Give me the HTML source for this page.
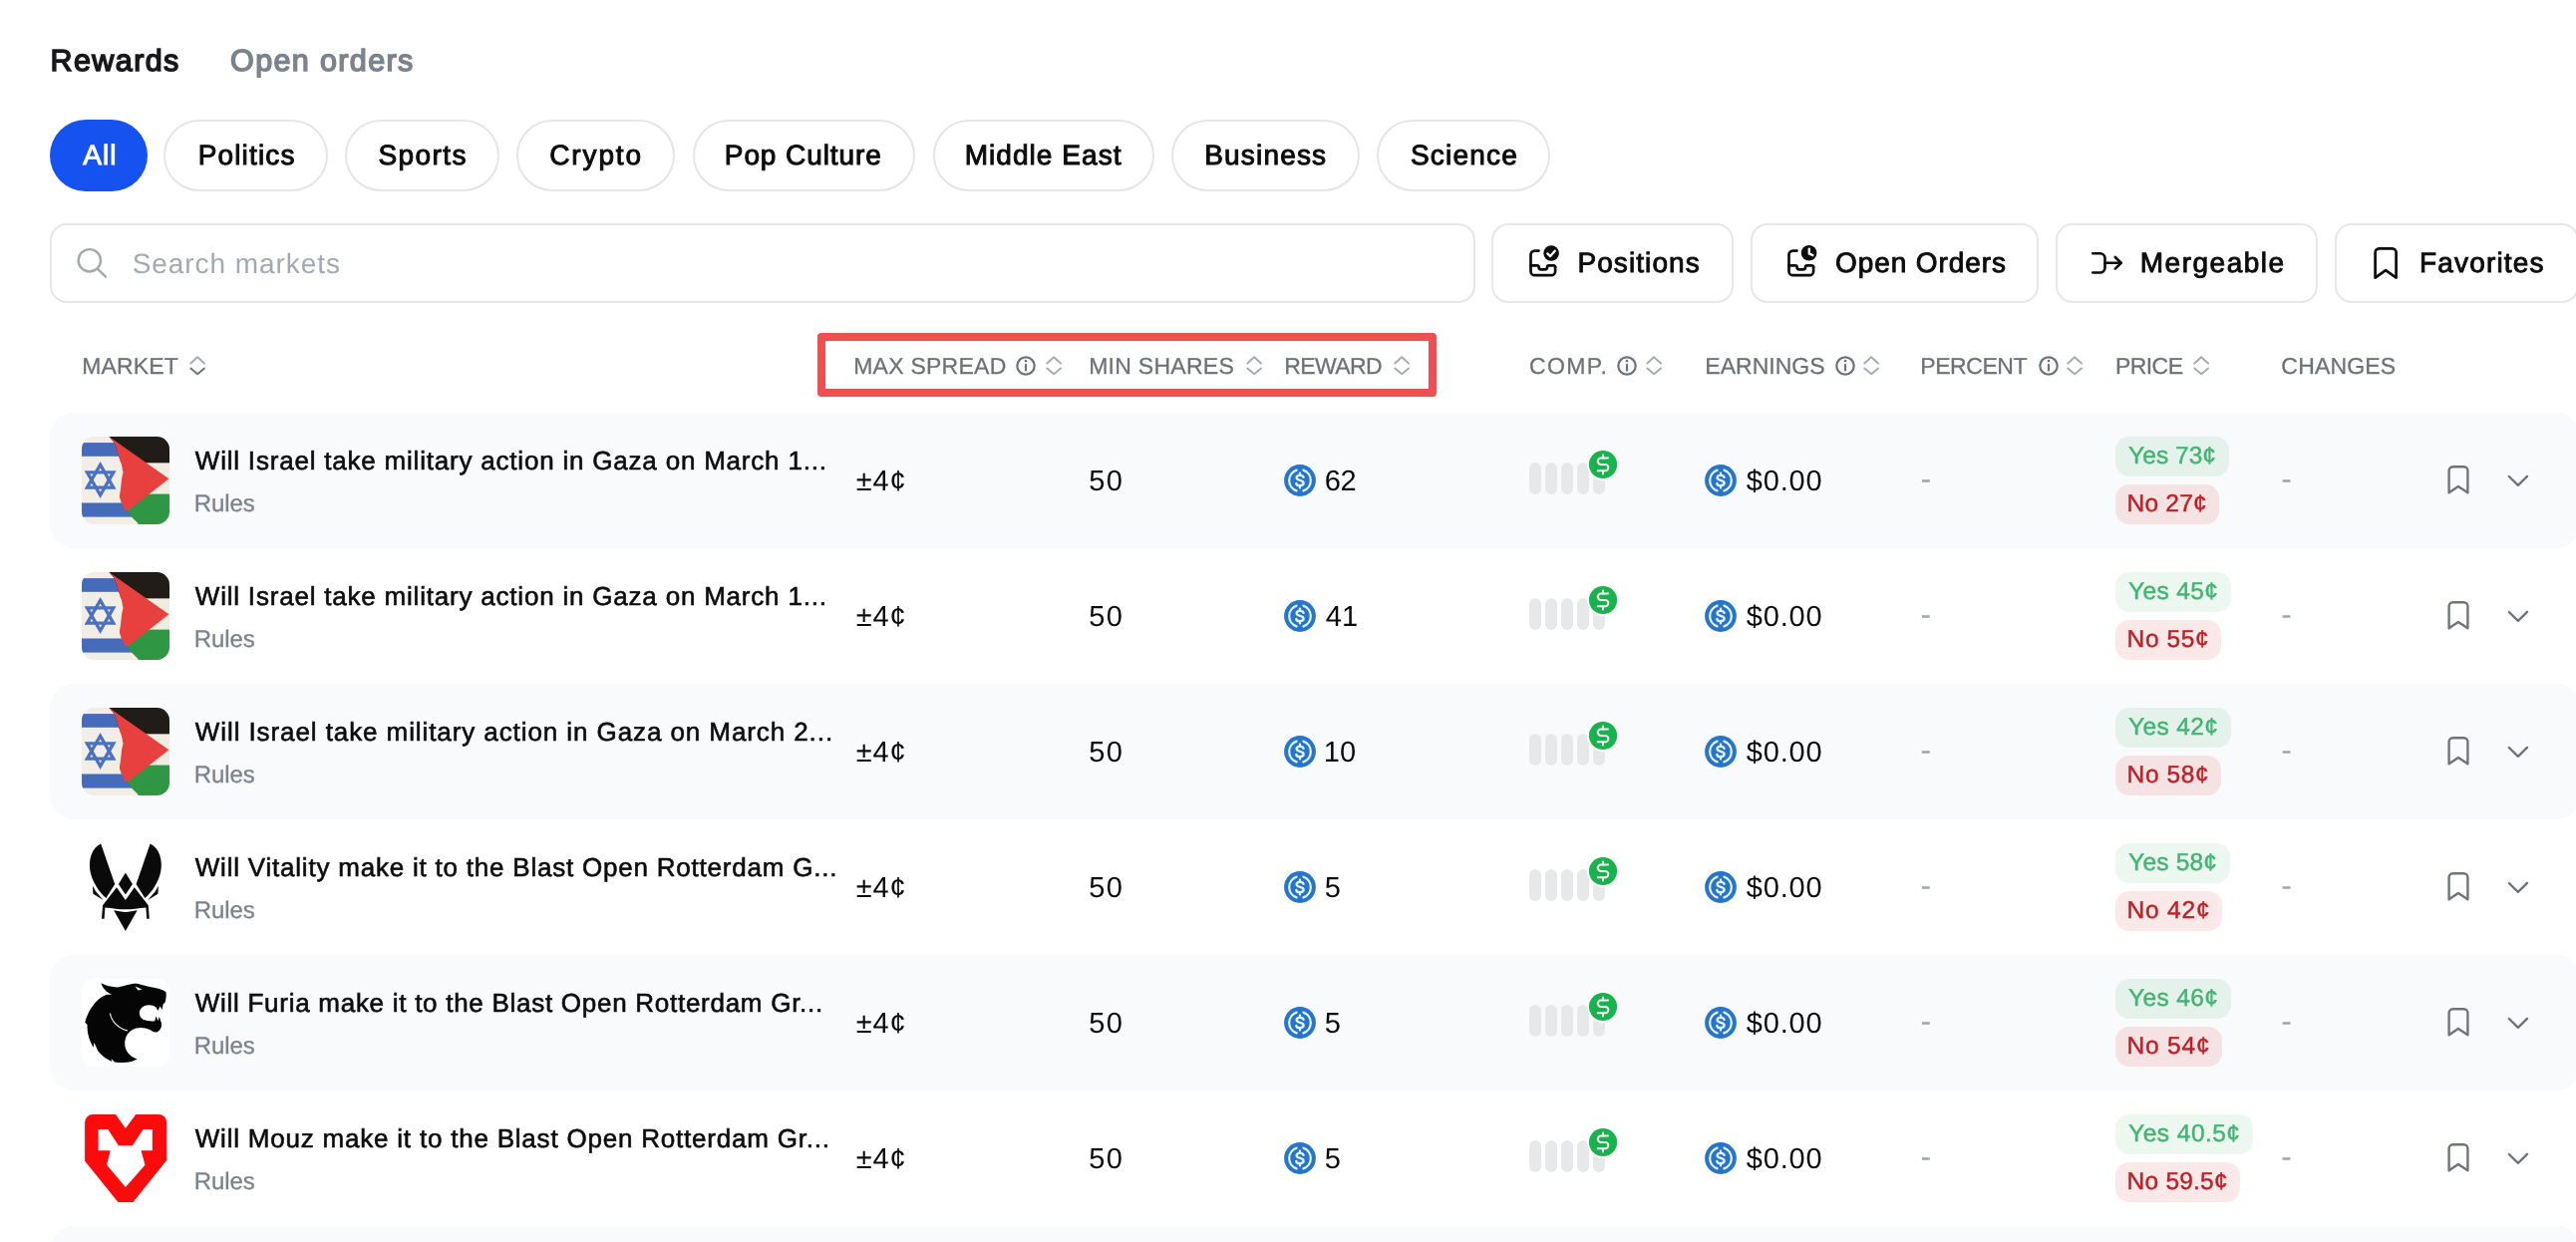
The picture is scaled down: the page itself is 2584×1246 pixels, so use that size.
<!DOCTYPE html>
<html lang="en"><head><meta charset="utf-8"><title>Rewards</title>
<style>
*{box-sizing:border-box;margin:0;padding:0;text-rendering:geometricPrecision}
html,body{width:2584px;height:1246px;overflow:hidden;background:#fff}
body{position:relative;font-family:"Liberation Sans", sans-serif}
#app{position:absolute;left:0;top:0;width:2584px;height:1246px;overflow:hidden;will-change:transform}
.t{position:absolute;white-space:nowrap;line-height:1;text-decoration:none;display:block}
.ic{position:absolute;display:block;overflow:visible}
.tabs,.pills,.thead,.tbody{position:absolute;left:0;top:0}
.pill{position:absolute;top:120px;height:72px;border-radius:36px;border:2px solid #e4e5e7;background:#fff}
.pill.on{background:#1652f0;border:0}
.search{position:absolute;left:50px;top:224px;width:1429.5px;height:80px;border:2px solid #e4e6e8;border-radius:17px;background:#fff}
.btn{position:absolute;top:224px;height:80px;border:2px solid #e6e7e9;border-radius:17px;background:#fff;font-family:inherit;display:block}
.hl{position:absolute;left:820px;top:334px;width:620.5px;height:64px;border:8px solid #f04f52;border-radius:4px}
.row{position:absolute;left:50px;width:2538px;height:136px;border-radius:24px}
.row.alt{background:#f9fafb}
.thumb{position:absolute;left:32px;top:24px;display:block}
.bars{position:absolute;left:1484px;top:50px;width:80px;height:32px}
.bars i{position:absolute;top:0;width:12px;height:32px;border-radius:6px;background:#e7e8ea}
.bars i:nth-child(1){left:0}.bars i:nth-child(2){left:16px}.bars i:nth-child(3){left:32px}.bars i:nth-child(4){left:48px}.bars i:nth-child(5){left:64px}
.tag{position:absolute;left:2072px;height:40px;border-radius:14px}
.tag.yes{top:24px;background:rgba(22,163,74,.085)}
.tag.no{top:72px;background:rgba(220,38,38,.105)}
</style></head>
<body>
<div id="app">
<nav class="tabs"><a class="t" style="left:50.55px;top:46px;font-size:30.5px;color:#18181b;letter-spacing:1.401px;-webkit-text-stroke:1.5px #18181b;">Rewards</a><a class="t" style="left:231.05px;top:46px;font-size:30.5px;color:#7b838f;letter-spacing:1.371px;-webkit-text-stroke:1.5px #7b838f;">Open orders</a></nav><div class="pills"><div class="pill on" style="left:50px;width:98px"><span class="t" style="left:33.20px;top:22px;font-size:28px;color:#fff;letter-spacing:1.102px;-webkit-text-stroke:1.0px #fff;">All</span></div>
<div class="pill" style="left:164px;width:165px"><span class="t" style="left:32.70px;top:20px;font-size:28px;color:#0c0c0d;letter-spacing:1.144px;-webkit-text-stroke:1.0px #0c0c0d;">Politics</span></div>
<div class="pill" style="left:346px;width:155px"><span class="t" style="left:31.40px;top:20px;font-size:28px;color:#0c0c0d;letter-spacing:1.415px;-webkit-text-stroke:1.0px #0c0c0d;">Sports</span></div>
<div class="pill" style="left:518px;width:159px"><span class="t" style="left:31.20px;top:20px;font-size:28px;color:#0c0c0d;letter-spacing:1.881px;-webkit-text-stroke:1.0px #0c0c0d;">Crypto</span></div>
<div class="pill" style="left:694.5px;width:223.5px"><span class="t" style="left:30.30px;top:20px;font-size:28px;color:#0c0c0d;letter-spacing:0.911px;-webkit-text-stroke:1.0px #0c0c0d;">Pop Culture</span></div>
<div class="pill" style="left:936px;width:222px"><span class="t" style="left:29.70px;top:20px;font-size:28px;color:#0c0c0d;letter-spacing:1.049px;-webkit-text-stroke:1.0px #0c0c0d;">Middle East</span></div>
<div class="pill" style="left:1175px;width:189px"><span class="t" style="left:31.20px;top:20px;font-size:28px;color:#0c0c0d;letter-spacing:1.184px;-webkit-text-stroke:1.0px #0c0c0d;">Business</span></div>
<div class="pill" style="left:1381px;width:174.29999999999995px"><span class="t" style="left:31.90px;top:20px;font-size:28px;color:#0c0c0d;letter-spacing:1.210px;-webkit-text-stroke:1.0px #0c0c0d;">Science</span></div></div>
<div class="search"><svg class="ic" style="left:20px;top:18.3px" width="40" height="40" viewBox="0 0 40 40" fill="none" stroke="#a3a8ad" stroke-width="2.4" stroke-linecap="round"><circle cx="17.8" cy="17.3" r="11.2"/><path d="M26 25.8 L34 33.6"/></svg><span class="t" style="left:80.70px;top:25px;font-size:28px;color:#a3a9b0;letter-spacing:0.941px;">Search markets</span></div><button class="btn" style="left:1496px;width:242.5px"><svg class="ic" style="left:32px;top:14px" width="40" height="44" viewBox="0 0 40 44" fill="none" stroke="#0c0c0d" stroke-width="2.7" stroke-linecap="round" stroke-linejoin="round"><path d="M13.5 11.6H9.5a4 4 0 0 0-4 4V32.2a4 4 0 0 0 4 4H26.1a4 4 0 0 0 4-4V27.9"/><path d="M5.5 26.4H12a1.6 1.6 0 0 1 1.6 1.6a2.4 2.4 0 0 0 2.4 2.4h3.6a2.4 2.4 0 0 0 2.4-2.4a1.6 1.6 0 0 1 1.6-1.6H28.6a1.5 1.5 0 0 1 1.5 1.5"/><circle cx="26.1" cy="14" r="7.8" fill="#0c0c0d" stroke="none"/><path d="M22.4 14.4l2.7 2.7l4.6-5.4" stroke="#fff" stroke-width="2.3"/></svg><span class="t" style="left:84.45px;top:24px;font-size:28px;color:#0c0c0d;letter-spacing:1.086px;-webkit-text-stroke:0.9px #0c0c0d;">Positions</span></button>
<button class="btn" style="left:1755.5px;width:289.5px"><svg class="ic" style="left:31.5px;top:14px" width="40" height="44" viewBox="0 0 40 44" fill="none" stroke="#0c0c0d" stroke-width="2.7" stroke-linecap="round" stroke-linejoin="round"><path d="M13.5 11.6H9.5a4 4 0 0 0-4 4V32.2a4 4 0 0 0 4 4H26.1a4 4 0 0 0 4-4V27.9"/><path d="M5.5 26.4H12a1.6 1.6 0 0 1 1.6 1.6a2.4 2.4 0 0 0 2.4 2.4h3.6a2.4 2.4 0 0 0 2.4-2.4a1.6 1.6 0 0 1 1.6-1.6H28.6a1.5 1.5 0 0 1 1.5 1.5"/><circle cx="25.6" cy="13.8" r="7.8" fill="#0c0c0d" stroke="none"/><path d="M25.8 9.6v4.8l3.6 1.7" stroke="#fff" stroke-width="2.4"/></svg><span class="t" style="left:83.45px;top:24px;font-size:28px;color:#0c0c0d;letter-spacing:0.925px;-webkit-text-stroke:0.9px #0c0c0d;">Open Orders</span></button>
<button class="btn" style="left:2061.5px;width:263.0px"><svg class="ic" style="left:34.5px;top:14px" width="40" height="44" viewBox="0 0 40 44" fill="none" stroke="#0c0c0d" stroke-width="2.6" stroke-linecap="round" stroke-linejoin="round"><path d="M1.3 14.3H8.5a5 5 0 0 1 5 5V28.5a5 5 0 0 1-5 5H1.3"/><path d="M13.6 23.8H29.4"/><path d="M23.8 18l5.9 5.8l-5.9 5.9"/></svg><span class="t" style="left:83.25px;top:24px;font-size:28px;color:#0c0c0d;letter-spacing:1.509px;-webkit-text-stroke:0.9px #0c0c0d;">Mergeable</span></button>
<button class="btn" style="left:2342px;width:245px"><svg class="ic" style="left:34px;top:14px" width="40" height="44" viewBox="0 0 40 44" fill="none" stroke="#0c0c0d" stroke-width="2.7" stroke-linecap="round" stroke-linejoin="round"><path d="M4.6 38.6V13.4a4 4 0 0 1 4-4H21.6a4 4 0 0 1 4 4V38.6L15.1 31.2Z"/></svg><span class="t" style="left:83.05px;top:24px;font-size:28px;color:#0c0c0d;letter-spacing:1.169px;-webkit-text-stroke:0.9px #0c0c0d;">Favorites</span></button><div class="thead"><span class="t th" style="left:82.15px;top:356px;font-size:23px;color:#6c717a;letter-spacing:0.142px;-webkit-text-stroke:0.3px #6c717a;">MARKET</span><svg class="ic" style="left:188.4px;top:354px" width="22" height="26" viewBox="0 0 22 26" fill="none" stroke-width="1.9" stroke-linecap="round" stroke-linejoin="round"><path d="M3.3 10.5L10.1 4.2L17 10.5" stroke="#a6aab1"/><path d="M3.3 15.5L10.2 21.3L17 15.5" stroke="#6b7280"/></svg><span class="t th" style="left:856.15px;top:356px;font-size:23px;color:#6c717a;letter-spacing:0.255px;-webkit-text-stroke:0.3px #6c717a;">MAX SPREAD</span><svg class="ic" style="left:1017.1px;top:355px" width="24" height="24" viewBox="0 0 24 24" fill="none" stroke="#6b7280" stroke-width="2.2" stroke-linecap="round"><circle cx="12" cy="12" r="8.7"/><path d="M12 10.9V16.6"/><circle cx="12" cy="7.1" r="1.35" fill="#6b7280" stroke="none"/></svg><svg class="ic" style="left:1046.6px;top:354px" width="22" height="26" viewBox="0 0 22 26" fill="none" stroke-width="1.9" stroke-linecap="round" stroke-linejoin="round"><path d="M3.3 10.5L10.1 4.2L17 10.5" stroke="#a6aab1"/><path d="M3.3 15.5L10.2 21.3L17 15.5" stroke="#a6aab1"/></svg><span class="t th" style="left:1092.15px;top:356px;font-size:23px;color:#6c717a;letter-spacing:0.279px;-webkit-text-stroke:0.3px #6c717a;">MIN SHARES</span><svg class="ic" style="left:1247.6px;top:354px" width="22" height="26" viewBox="0 0 22 26" fill="none" stroke-width="1.9" stroke-linecap="round" stroke-linejoin="round"><path d="M3.3 10.5L10.1 4.2L17 10.5" stroke="#a6aab1"/><path d="M3.3 15.5L10.2 21.3L17 15.5" stroke="#a6aab1"/></svg><span class="t th" style="left:1288.15px;top:356px;font-size:23px;color:#6c717a;letter-spacing:-0.571px;-webkit-text-stroke:0.3px #6c717a;">REWARD</span><svg class="ic" style="left:1396.0px;top:354px" width="22" height="26" viewBox="0 0 22 26" fill="none" stroke-width="1.9" stroke-linecap="round" stroke-linejoin="round"><path d="M3.3 10.5L10.1 4.2L17 10.5" stroke="#a6aab1"/><path d="M3.3 15.5L10.2 21.3L17 15.5" stroke="#a6aab1"/></svg><span class="t th" style="left:1533.95px;top:356px;font-size:23px;color:#6c717a;letter-spacing:1.366px;-webkit-text-stroke:0.3px #6c717a;">COMP.</span><svg class="ic" style="left:1619.5px;top:355px" width="24" height="24" viewBox="0 0 24 24" fill="none" stroke="#6b7280" stroke-width="2.2" stroke-linecap="round"><circle cx="12" cy="12" r="8.7"/><path d="M12 10.9V16.6"/><circle cx="12" cy="7.1" r="1.35" fill="#6b7280" stroke="none"/></svg><svg class="ic" style="left:1648.7px;top:354px" width="22" height="26" viewBox="0 0 22 26" fill="none" stroke-width="1.9" stroke-linecap="round" stroke-linejoin="round"><path d="M3.3 10.5L10.1 4.2L17 10.5" stroke="#a6aab1"/><path d="M3.3 15.5L10.2 21.3L17 15.5" stroke="#a6aab1"/></svg><span class="t th" style="left:1710.35px;top:356px;font-size:23px;color:#6c717a;-webkit-text-stroke:0.3px #6c717a;">EARNINGS</span><svg class="ic" style="left:1838.5px;top:355px" width="24" height="24" viewBox="0 0 24 24" fill="none" stroke="#6b7280" stroke-width="2.2" stroke-linecap="round"><circle cx="12" cy="12" r="8.7"/><path d="M12 10.9V16.6"/><circle cx="12" cy="7.1" r="1.35" fill="#6b7280" stroke="none"/></svg><svg class="ic" style="left:1867.3px;top:354px" width="22" height="26" viewBox="0 0 22 26" fill="none" stroke-width="1.9" stroke-linecap="round" stroke-linejoin="round"><path d="M3.3 10.5L10.1 4.2L17 10.5" stroke="#a6aab1"/><path d="M3.3 15.5L10.2 21.3L17 15.5" stroke="#a6aab1"/></svg><span class="t th" style="left:1926.35px;top:356px;font-size:23px;color:#6c717a;letter-spacing:-0.459px;-webkit-text-stroke:0.3px #6c717a;">PERCENT</span><svg class="ic" style="left:2042.5px;top:355px" width="24" height="24" viewBox="0 0 24 24" fill="none" stroke="#6b7280" stroke-width="2.2" stroke-linecap="round"><circle cx="12" cy="12" r="8.7"/><path d="M12 10.9V16.6"/><circle cx="12" cy="7.1" r="1.35" fill="#6b7280" stroke="none"/></svg><svg class="ic" style="left:2071.0px;top:354px" width="22" height="26" viewBox="0 0 22 26" fill="none" stroke-width="1.9" stroke-linecap="round" stroke-linejoin="round"><path d="M3.3 10.5L10.1 4.2L17 10.5" stroke="#a6aab1"/><path d="M3.3 15.5L10.2 21.3L17 15.5" stroke="#a6aab1"/></svg><span class="t th" style="left:2121.95px;top:356px;font-size:23px;color:#6c717a;letter-spacing:-0.563px;-webkit-text-stroke:0.3px #6c717a;">PRICE</span><svg class="ic" style="left:2198.3px;top:354px" width="22" height="26" viewBox="0 0 22 26" fill="none" stroke-width="1.9" stroke-linecap="round" stroke-linejoin="round"><path d="M3.3 10.5L10.1 4.2L17 10.5" stroke="#a6aab1"/><path d="M3.3 15.5L10.2 21.3L17 15.5" stroke="#a6aab1"/></svg><span class="t th" style="left:2288.35px;top:356px;font-size:23px;color:#6c717a;letter-spacing:0.183px;-webkit-text-stroke:0.3px #6c717a;">CHANGES</span><div class="hl"></div></div>
<div class="tbody"><div class="row alt" style="top:414px"><svg class="thumb" width="88" height="88" viewBox="0 0 88 88"><defs><clipPath id="cpF0"><rect width="88" height="88" rx="12.5"/></clipPath><clipPath id="cpT0"><path d="M27.4 0L32.6 6L35 12L36.7 18.2L39.9 27.8L41.5 35.9L40.3 41L39.9 43.9L39.1 52L37.9 60L39.9 66.5L43.1 72.9L46.3 75.3L50.4 81L56 86.6L56.8 88H88V0Z"/></clipPath></defs><g clip-path="url(#cpF0)"><rect width="88" height="88" fill="#f3eee5"/><rect x="0" y="6.1" width="42" height="13.7" fill="#446cba"/><rect x="0" y="66.5" width="52" height="14.1" fill="#446cba"/><g fill="none" stroke="#4b71c0" stroke-width="3.3" stroke-linejoin="miter"><path d="M18.6 28.3L31.76 51.1H5.44Z"/><path d="M18.6 58.7L5.44 35.9H31.76Z"/></g><g clip-path="url(#cpT0)"><rect x="20" y="0" width="68" height="26.6" fill="#221c19"/><rect x="20" y="26.6" width="68" height="31" fill="#f1ece2"/><rect x="20" y="57.6" width="68" height="31" fill="#2f9644"/><path d="M20 -5.2L87.4 42.3L20 95Z" fill="#e8403f"/></g></g></svg><span class="t title" style="left:145.80px;top:35px;font-size:26px;color:#0c0c0d;letter-spacing:0.795px;-webkit-text-stroke:0.6px #0c0c0d;">Will Israel take military action in Gaza on March 1...</span><span class="t" style="left:144.85px;top:80px;font-size:24px;color:#7b8391;letter-spacing:-0.090px;-webkit-text-stroke:0.3px #7b8391;">Rules</span><span class="t" style="left:808.70px;top:55px;font-size:29px;color:#0a0a0a;letter-spacing:0.828px;">±4¢</span><span class="t" style="left:1042.30px;top:55px;font-size:29px;color:#0a0a0a;letter-spacing:1.372px;">50</span><svg class="ic" style="left:1238px;top:52px" width="32" height="32" viewBox="0 0 32 32"><circle cx="16" cy="16" r="15.9" fill="#2775ca"/><g fill="none" stroke="#e6f5ff" stroke-width="2.2" stroke-linecap="round"><path d="M12.6 5.6A11 11 0 0 0 12.6 26.4"/><path d="M19.4 5.6A11 11 0 0 1 19.4 26.4"/><path d="M19.6 12.9C19.2 11.4 17.8 10.8 16 10.8C14 10.8 12.6 11.8 12.6 13.3C12.6 16.8 19.6 15 19.6 18.6C19.6 20.2 18.1 21.2 16 21.2C14 21.2 12.6 20.4 12.3 18.9" stroke-width="2.3"/><path d="M16 8.6V10.6M16 21.4V23.4" stroke-width="2.3"/></g></svg><span class="t" style="left:1278.80px;top:55px;font-size:29px;color:#0a0a0a;letter-spacing:-0.428px;">62</span><div class="bars"><i></i><i></i><i></i><i></i><i></i></div><svg class="ic" style="left:1542px;top:36px" width="32" height="32" viewBox="0 0 32 32"><circle cx="16" cy="16" r="16" fill="#fff"/><circle cx="16" cy="16" r="14.1" fill="#17b34c"/><g fill="none" stroke="#fff" stroke-width="2" stroke-linecap="round" stroke-linejoin="round"><path d="M16 6.4V9.4M16 22.6V25.6"/><path d="M21 9.5H14a3.2 3.2 0 0 0 0 6.4h4.2a3.2 3.2 0 0 1 0 6.4H10.8"/></g></svg><svg class="ic" style="left:1660px;top:52px" width="32" height="32" viewBox="0 0 32 32"><circle cx="16" cy="16" r="15.9" fill="#2775ca"/><g fill="none" stroke="#e6f5ff" stroke-width="2.2" stroke-linecap="round"><path d="M12.6 5.6A11 11 0 0 0 12.6 26.4"/><path d="M19.4 5.6A11 11 0 0 1 19.4 26.4"/><path d="M19.6 12.9C19.2 11.4 17.8 10.8 16 10.8C14 10.8 12.6 11.8 12.6 13.3C12.6 16.8 19.6 15 19.6 18.6C19.6 20.2 18.1 21.2 16 21.2C14 21.2 12.6 20.4 12.3 18.9" stroke-width="2.3"/><path d="M16 8.6V10.6M16 21.4V23.4" stroke-width="2.3"/></g></svg><span class="t" style="left:1701.80px;top:55px;font-size:29px;color:#0a0a0a;letter-spacing:0.789px;">$0.00</span><span class="t muted" style="left:1876.40px;top:50px;font-size:32px;color:#a0a5ad;">-</span><div class="tag yes" style="width:114px"><span class="t" style="left:13.12px;top:8px;font-size:24.5px;color:#44b473;letter-spacing:0.037px;-webkit-text-stroke:0.45px #44b473;">Yes 73¢</span></div>
<div class="tag no" style="width:104px"><span class="t" style="left:11.62px;top:8px;font-size:24.5px;color:#bf1f25;letter-spacing:0.195px;-webkit-text-stroke:0.45px #bf1f25;">No 27¢</span></div><span class="t muted" style="left:2238.20px;top:50px;font-size:32px;color:#a0a5ad;">-</span><svg class="ic" style="left:2400px;top:48px" width="32" height="40" viewBox="0 0 32 40" fill="none" stroke="#6e737c" stroke-width="2.4" stroke-linecap="round" stroke-linejoin="round"><path d="M6.6 32.3V10.3a4 4 0 0 1 4-4H21.4a4 4 0 0 1 4 4V32.3L15.9 26Z"/></svg><svg class="ic" style="left:2460px;top:56px" width="32" height="24" viewBox="0 0 32 24" fill="none" stroke="#6e737c" stroke-width="2.4" stroke-linecap="round" stroke-linejoin="round"><path d="M6.8 8L15.9 16.8L25 7.9"/></svg></div>
<div class="row" style="top:550px"><svg class="thumb" width="88" height="88" viewBox="0 0 88 88"><defs><clipPath id="cpF1"><rect width="88" height="88" rx="12.5"/></clipPath><clipPath id="cpT1"><path d="M27.4 0L32.6 6L35 12L36.7 18.2L39.9 27.8L41.5 35.9L40.3 41L39.9 43.9L39.1 52L37.9 60L39.9 66.5L43.1 72.9L46.3 75.3L50.4 81L56 86.6L56.8 88H88V0Z"/></clipPath></defs><g clip-path="url(#cpF1)"><rect width="88" height="88" fill="#f3eee5"/><rect x="0" y="6.1" width="42" height="13.7" fill="#446cba"/><rect x="0" y="66.5" width="52" height="14.1" fill="#446cba"/><g fill="none" stroke="#4b71c0" stroke-width="3.3" stroke-linejoin="miter"><path d="M18.6 28.3L31.76 51.1H5.44Z"/><path d="M18.6 58.7L5.44 35.9H31.76Z"/></g><g clip-path="url(#cpT1)"><rect x="20" y="0" width="68" height="26.6" fill="#221c19"/><rect x="20" y="26.6" width="68" height="31" fill="#f1ece2"/><rect x="20" y="57.6" width="68" height="31" fill="#2f9644"/><path d="M20 -5.2L87.4 42.3L20 95Z" fill="#e8403f"/></g></g></svg><span class="t title" style="left:145.80px;top:35px;font-size:26px;color:#0c0c0d;letter-spacing:0.795px;-webkit-text-stroke:0.6px #0c0c0d;">Will Israel take military action in Gaza on March 1...</span><span class="t" style="left:144.85px;top:80px;font-size:24px;color:#7b8391;letter-spacing:-0.090px;-webkit-text-stroke:0.3px #7b8391;">Rules</span><span class="t" style="left:808.70px;top:55px;font-size:29px;color:#0a0a0a;letter-spacing:0.828px;">±4¢</span><span class="t" style="left:1042.30px;top:55px;font-size:29px;color:#0a0a0a;letter-spacing:1.372px;">50</span><svg class="ic" style="left:1238px;top:52px" width="32" height="32" viewBox="0 0 32 32"><circle cx="16" cy="16" r="15.9" fill="#2775ca"/><g fill="none" stroke="#e6f5ff" stroke-width="2.2" stroke-linecap="round"><path d="M12.6 5.6A11 11 0 0 0 12.6 26.4"/><path d="M19.4 5.6A11 11 0 0 1 19.4 26.4"/><path d="M19.6 12.9C19.2 11.4 17.8 10.8 16 10.8C14 10.8 12.6 11.8 12.6 13.3C12.6 16.8 19.6 15 19.6 18.6C19.6 20.2 18.1 21.2 16 21.2C14 21.2 12.6 20.4 12.3 18.9" stroke-width="2.3"/><path d="M16 8.6V10.6M16 21.4V23.4" stroke-width="2.3"/></g></svg><span class="t" style="left:1279.80px;top:55px;font-size:29px;color:#0a0a0a;">41</span><div class="bars"><i></i><i></i><i></i><i></i><i></i></div><svg class="ic" style="left:1542px;top:36px" width="32" height="32" viewBox="0 0 32 32"><circle cx="16" cy="16" r="16" fill="#fff"/><circle cx="16" cy="16" r="14.1" fill="#17b34c"/><g fill="none" stroke="#fff" stroke-width="2" stroke-linecap="round" stroke-linejoin="round"><path d="M16 6.4V9.4M16 22.6V25.6"/><path d="M21 9.5H14a3.2 3.2 0 0 0 0 6.4h4.2a3.2 3.2 0 0 1 0 6.4H10.8"/></g></svg><svg class="ic" style="left:1660px;top:52px" width="32" height="32" viewBox="0 0 32 32"><circle cx="16" cy="16" r="15.9" fill="#2775ca"/><g fill="none" stroke="#e6f5ff" stroke-width="2.2" stroke-linecap="round"><path d="M12.6 5.6A11 11 0 0 0 12.6 26.4"/><path d="M19.4 5.6A11 11 0 0 1 19.4 26.4"/><path d="M19.6 12.9C19.2 11.4 17.8 10.8 16 10.8C14 10.8 12.6 11.8 12.6 13.3C12.6 16.8 19.6 15 19.6 18.6C19.6 20.2 18.1 21.2 16 21.2C14 21.2 12.6 20.4 12.3 18.9" stroke-width="2.3"/><path d="M16 8.6V10.6M16 21.4V23.4" stroke-width="2.3"/></g></svg><span class="t" style="left:1701.80px;top:55px;font-size:29px;color:#0a0a0a;letter-spacing:0.789px;">$0.00</span><span class="t muted" style="left:1876.40px;top:50px;font-size:32px;color:#a0a5ad;">-</span><div class="tag yes" style="width:116px"><span class="t" style="left:13.12px;top:8px;font-size:24.5px;color:#44b473;letter-spacing:0.371px;-webkit-text-stroke:0.45px #44b473;">Yes 45¢</span></div>
<div class="tag no" style="width:106px"><span class="t" style="left:11.62px;top:8px;font-size:24.5px;color:#bf1f25;letter-spacing:0.595px;-webkit-text-stroke:0.45px #bf1f25;">No 55¢</span></div><span class="t muted" style="left:2238.20px;top:50px;font-size:32px;color:#a0a5ad;">-</span><svg class="ic" style="left:2400px;top:48px" width="32" height="40" viewBox="0 0 32 40" fill="none" stroke="#6e737c" stroke-width="2.4" stroke-linecap="round" stroke-linejoin="round"><path d="M6.6 32.3V10.3a4 4 0 0 1 4-4H21.4a4 4 0 0 1 4 4V32.3L15.9 26Z"/></svg><svg class="ic" style="left:2460px;top:56px" width="32" height="24" viewBox="0 0 32 24" fill="none" stroke="#6e737c" stroke-width="2.4" stroke-linecap="round" stroke-linejoin="round"><path d="M6.8 8L15.9 16.8L25 7.9"/></svg></div>
<div class="row alt" style="top:686px"><svg class="thumb" width="88" height="88" viewBox="0 0 88 88"><defs><clipPath id="cpF2"><rect width="88" height="88" rx="12.5"/></clipPath><clipPath id="cpT2"><path d="M27.4 0L32.6 6L35 12L36.7 18.2L39.9 27.8L41.5 35.9L40.3 41L39.9 43.9L39.1 52L37.9 60L39.9 66.5L43.1 72.9L46.3 75.3L50.4 81L56 86.6L56.8 88H88V0Z"/></clipPath></defs><g clip-path="url(#cpF2)"><rect width="88" height="88" fill="#f3eee5"/><rect x="0" y="6.1" width="42" height="13.7" fill="#446cba"/><rect x="0" y="66.5" width="52" height="14.1" fill="#446cba"/><g fill="none" stroke="#4b71c0" stroke-width="3.3" stroke-linejoin="miter"><path d="M18.6 28.3L31.76 51.1H5.44Z"/><path d="M18.6 58.7L5.44 35.9H31.76Z"/></g><g clip-path="url(#cpT2)"><rect x="20" y="0" width="68" height="26.6" fill="#221c19"/><rect x="20" y="26.6" width="68" height="31" fill="#f1ece2"/><rect x="20" y="57.6" width="68" height="31" fill="#2f9644"/><path d="M20 -5.2L87.4 42.3L20 95Z" fill="#e8403f"/></g></g></svg><span class="t title" style="left:145.80px;top:35px;font-size:26px;color:#0c0c0d;letter-spacing:0.912px;-webkit-text-stroke:0.6px #0c0c0d;">Will Israel take military action in Gaza on March 2...</span><span class="t" style="left:144.85px;top:80px;font-size:24px;color:#7b8391;letter-spacing:-0.090px;-webkit-text-stroke:0.3px #7b8391;">Rules</span><span class="t" style="left:808.70px;top:55px;font-size:29px;color:#0a0a0a;letter-spacing:0.828px;">±4¢</span><span class="t" style="left:1042.30px;top:55px;font-size:29px;color:#0a0a0a;letter-spacing:1.372px;">50</span><svg class="ic" style="left:1238px;top:52px" width="32" height="32" viewBox="0 0 32 32"><circle cx="16" cy="16" r="15.9" fill="#2775ca"/><g fill="none" stroke="#e6f5ff" stroke-width="2.2" stroke-linecap="round"><path d="M12.6 5.6A11 11 0 0 0 12.6 26.4"/><path d="M19.4 5.6A11 11 0 0 1 19.4 26.4"/><path d="M19.6 12.9C19.2 11.4 17.8 10.8 16 10.8C14 10.8 12.6 11.8 12.6 13.3C12.6 16.8 19.6 15 19.6 18.6C19.6 20.2 18.1 21.2 16 21.2C14 21.2 12.6 20.4 12.3 18.9" stroke-width="2.3"/><path d="M16 8.6V10.6M16 21.4V23.4" stroke-width="2.3"/></g></svg><span class="t" style="left:1277.80px;top:55px;font-size:29px;color:#0a0a0a;">10</span><div class="bars"><i></i><i></i><i></i><i></i><i></i></div><svg class="ic" style="left:1542px;top:36px" width="32" height="32" viewBox="0 0 32 32"><circle cx="16" cy="16" r="16" fill="#fff"/><circle cx="16" cy="16" r="14.1" fill="#17b34c"/><g fill="none" stroke="#fff" stroke-width="2" stroke-linecap="round" stroke-linejoin="round"><path d="M16 6.4V9.4M16 22.6V25.6"/><path d="M21 9.5H14a3.2 3.2 0 0 0 0 6.4h4.2a3.2 3.2 0 0 1 0 6.4H10.8"/></g></svg><svg class="ic" style="left:1660px;top:52px" width="32" height="32" viewBox="0 0 32 32"><circle cx="16" cy="16" r="15.9" fill="#2775ca"/><g fill="none" stroke="#e6f5ff" stroke-width="2.2" stroke-linecap="round"><path d="M12.6 5.6A11 11 0 0 0 12.6 26.4"/><path d="M19.4 5.6A11 11 0 0 1 19.4 26.4"/><path d="M19.6 12.9C19.2 11.4 17.8 10.8 16 10.8C14 10.8 12.6 11.8 12.6 13.3C12.6 16.8 19.6 15 19.6 18.6C19.6 20.2 18.1 21.2 16 21.2C14 21.2 12.6 20.4 12.3 18.9" stroke-width="2.3"/><path d="M16 8.6V10.6M16 21.4V23.4" stroke-width="2.3"/></g></svg><span class="t" style="left:1701.80px;top:55px;font-size:29px;color:#0a0a0a;letter-spacing:0.789px;">$0.00</span><span class="t muted" style="left:1876.40px;top:50px;font-size:32px;color:#a0a5ad;">-</span><div class="tag yes" style="width:116px"><span class="t" style="left:13.12px;top:8px;font-size:24.5px;color:#44b473;letter-spacing:0.371px;-webkit-text-stroke:0.45px #44b473;">Yes 42¢</span></div>
<div class="tag no" style="width:106px"><span class="t" style="left:11.62px;top:8px;font-size:24.5px;color:#bf1f25;letter-spacing:0.595px;-webkit-text-stroke:0.45px #bf1f25;">No 58¢</span></div><span class="t muted" style="left:2238.20px;top:50px;font-size:32px;color:#a0a5ad;">-</span><svg class="ic" style="left:2400px;top:48px" width="32" height="40" viewBox="0 0 32 40" fill="none" stroke="#6e737c" stroke-width="2.4" stroke-linecap="round" stroke-linejoin="round"><path d="M6.6 32.3V10.3a4 4 0 0 1 4-4H21.4a4 4 0 0 1 4 4V32.3L15.9 26Z"/></svg><svg class="ic" style="left:2460px;top:56px" width="32" height="24" viewBox="0 0 32 24" fill="none" stroke="#6e737c" stroke-width="2.4" stroke-linecap="round" stroke-linejoin="round"><path d="M6.8 8L15.9 16.8L25 7.9"/></svg></div>
<div class="row" style="top:822px"><svg class="thumb" width="88" height="88" viewBox="0 0 88 88" fill="#0a0a0a"><path d="M19.2 0.6C10.5 4.2 6.2 16.5 8.6 28.5C10.6 38.5 17 48.5 24.4 55L33.2 41Z"/><path d="M68.6 0.6C77.3 4.2 81.6 16.5 79.2 28.5C77.2 38.5 70.8 48.5 63.4 55L54.6 41Z"/><path d="M43.9 29.4L50.9 41L43.9 51.6L36.9 41Z"/><path d="M35 44.2L43.9 57L52.8 44.2L66.8 62.3L67.8 75.8L65.2 75.8L64.4 64.4C57 65.2 50 66.2 43.9 66.2C37.8 66.2 30.8 65.2 23.4 64.4L22.6 75.8L20 75.8L21 62.3Z"/><path d="M32.1 67.2C36 67.8 40 68.8 43.9 69C47.8 68.8 51.8 67.8 55.7 67.2L43.9 88Z"/><path d="M10.9 42.8L14.2 48.6L21.6 57L11.4 50.8Z"/><path d="M76.9 42.8L73.6 48.6L66.2 57L76.4 50.8Z"/></svg><span class="t title" style="left:145.80px;top:35px;font-size:26px;color:#0c0c0d;letter-spacing:0.784px;-webkit-text-stroke:0.6px #0c0c0d;">Will Vitality make it to the Blast Open Rotterdam G...</span><span class="t" style="left:144.85px;top:80px;font-size:24px;color:#7b8391;letter-spacing:-0.090px;-webkit-text-stroke:0.3px #7b8391;">Rules</span><span class="t" style="left:808.70px;top:55px;font-size:29px;color:#0a0a0a;letter-spacing:0.828px;">±4¢</span><span class="t" style="left:1042.30px;top:55px;font-size:29px;color:#0a0a0a;letter-spacing:1.372px;">50</span><svg class="ic" style="left:1238px;top:52px" width="32" height="32" viewBox="0 0 32 32"><circle cx="16" cy="16" r="15.9" fill="#2775ca"/><g fill="none" stroke="#e6f5ff" stroke-width="2.2" stroke-linecap="round"><path d="M12.6 5.6A11 11 0 0 0 12.6 26.4"/><path d="M19.4 5.6A11 11 0 0 1 19.4 26.4"/><path d="M19.6 12.9C19.2 11.4 17.8 10.8 16 10.8C14 10.8 12.6 11.8 12.6 13.3C12.6 16.8 19.6 15 19.6 18.6C19.6 20.2 18.1 21.2 16 21.2C14 21.2 12.6 20.4 12.3 18.9" stroke-width="2.3"/><path d="M16 8.6V10.6M16 21.4V23.4" stroke-width="2.3"/></g></svg><span class="t" style="left:1278.80px;top:55px;font-size:29px;color:#0a0a0a;">5</span><div class="bars"><i></i><i></i><i></i><i></i><i></i></div><svg class="ic" style="left:1542px;top:36px" width="32" height="32" viewBox="0 0 32 32"><circle cx="16" cy="16" r="16" fill="#fff"/><circle cx="16" cy="16" r="14.1" fill="#17b34c"/><g fill="none" stroke="#fff" stroke-width="2" stroke-linecap="round" stroke-linejoin="round"><path d="M16 6.4V9.4M16 22.6V25.6"/><path d="M21 9.5H14a3.2 3.2 0 0 0 0 6.4h4.2a3.2 3.2 0 0 1 0 6.4H10.8"/></g></svg><svg class="ic" style="left:1660px;top:52px" width="32" height="32" viewBox="0 0 32 32"><circle cx="16" cy="16" r="15.9" fill="#2775ca"/><g fill="none" stroke="#e6f5ff" stroke-width="2.2" stroke-linecap="round"><path d="M12.6 5.6A11 11 0 0 0 12.6 26.4"/><path d="M19.4 5.6A11 11 0 0 1 19.4 26.4"/><path d="M19.6 12.9C19.2 11.4 17.8 10.8 16 10.8C14 10.8 12.6 11.8 12.6 13.3C12.6 16.8 19.6 15 19.6 18.6C19.6 20.2 18.1 21.2 16 21.2C14 21.2 12.6 20.4 12.3 18.9" stroke-width="2.3"/><path d="M16 8.6V10.6M16 21.4V23.4" stroke-width="2.3"/></g></svg><span class="t" style="left:1701.80px;top:55px;font-size:29px;color:#0a0a0a;letter-spacing:0.789px;">$0.00</span><span class="t muted" style="left:1876.40px;top:50px;font-size:32px;color:#a0a5ad;">-</span><div class="tag yes" style="width:115px"><span class="t" style="left:13.12px;top:8px;font-size:24.5px;color:#44b473;letter-spacing:0.204px;-webkit-text-stroke:0.45px #44b473;">Yes 58¢</span></div>
<div class="tag no" style="width:107px"><span class="t" style="left:11.62px;top:8px;font-size:24.5px;color:#bf1f25;letter-spacing:0.795px;-webkit-text-stroke:0.45px #bf1f25;">No 42¢</span></div><span class="t muted" style="left:2238.20px;top:50px;font-size:32px;color:#a0a5ad;">-</span><svg class="ic" style="left:2400px;top:48px" width="32" height="40" viewBox="0 0 32 40" fill="none" stroke="#6e737c" stroke-width="2.4" stroke-linecap="round" stroke-linejoin="round"><path d="M6.6 32.3V10.3a4 4 0 0 1 4-4H21.4a4 4 0 0 1 4 4V32.3L15.9 26Z"/></svg><svg class="ic" style="left:2460px;top:56px" width="32" height="24" viewBox="0 0 32 24" fill="none" stroke="#6e737c" stroke-width="2.4" stroke-linecap="round" stroke-linejoin="round"><path d="M6.8 8L15.9 16.8L25 7.9"/></svg></div>
<div class="row alt" style="top:958px"><svg class="thumb" width="88" height="88" viewBox="0 0 88 88"><rect width="88" height="88" rx="12" fill="#fff"/><path fill="#050505" d="M19.5 4.2C24 7 30 8.2 36 8.4C42 7.6 48 4.6 55.5 4.8C62 6.5 68 8 74.5 9.2C79 10 82.5 11.5 84.6 13.4C84.8 17 84.6 20.5 83.6 23.6L81.6 25.6L80.6 31L78.6 27.5L76.4 32L74.6 28.4C70 25.6 63.5 25.4 59.6 29.6C56.6 33.4 57.6 38.4 61.6 40.8C65.6 42.4 70 42.6 73.4 42.2L74.4 37.6L76.6 42L77.8 38L79.6 43.6C80.8 47 79.6 51 76 53.2C73 54 70.6 52.6 68.6 51C64 48.8 58.6 48.4 54.6 49.4C47 51.6 43 58 43.2 65.5C43.6 72 47.6 78 55.6 80.4C50 84 42 84.6 33 83.4L29.4 80L30.4 83C25 81 20 77.4 16.4 72.6L12.4 64L11.6 69C7.6 62 5 54 5.6 46L3.2 43.6C4.6 38 7 33 10 28.6C13.4 23 18 18.6 24.4 16C26.6 15.6 28.6 15.4 30.2 15.4C25 13.6 21 10 19.5 4.2Z"/><path d="M28.4 34.5C29.5 42 36 49.4 46 52" fill="none" stroke="#fff" stroke-width="1.1"/><path d="M53.5 7.6L60.5 10.6L56.5 11.4Z" fill="#fff"/></svg><span class="t title" style="left:145.80px;top:35px;font-size:26px;color:#0c0c0d;letter-spacing:0.725px;-webkit-text-stroke:0.6px #0c0c0d;">Will Furia make it to the Blast Open Rotterdam Gr...</span><span class="t" style="left:144.85px;top:80px;font-size:24px;color:#7b8391;letter-spacing:-0.090px;-webkit-text-stroke:0.3px #7b8391;">Rules</span><span class="t" style="left:808.70px;top:55px;font-size:29px;color:#0a0a0a;letter-spacing:0.828px;">±4¢</span><span class="t" style="left:1042.30px;top:55px;font-size:29px;color:#0a0a0a;letter-spacing:1.372px;">50</span><svg class="ic" style="left:1238px;top:52px" width="32" height="32" viewBox="0 0 32 32"><circle cx="16" cy="16" r="15.9" fill="#2775ca"/><g fill="none" stroke="#e6f5ff" stroke-width="2.2" stroke-linecap="round"><path d="M12.6 5.6A11 11 0 0 0 12.6 26.4"/><path d="M19.4 5.6A11 11 0 0 1 19.4 26.4"/><path d="M19.6 12.9C19.2 11.4 17.8 10.8 16 10.8C14 10.8 12.6 11.8 12.6 13.3C12.6 16.8 19.6 15 19.6 18.6C19.6 20.2 18.1 21.2 16 21.2C14 21.2 12.6 20.4 12.3 18.9" stroke-width="2.3"/><path d="M16 8.6V10.6M16 21.4V23.4" stroke-width="2.3"/></g></svg><span class="t" style="left:1278.80px;top:55px;font-size:29px;color:#0a0a0a;">5</span><div class="bars"><i></i><i></i><i></i><i></i><i></i></div><svg class="ic" style="left:1542px;top:36px" width="32" height="32" viewBox="0 0 32 32"><circle cx="16" cy="16" r="16" fill="#fff"/><circle cx="16" cy="16" r="14.1" fill="#17b34c"/><g fill="none" stroke="#fff" stroke-width="2" stroke-linecap="round" stroke-linejoin="round"><path d="M16 6.4V9.4M16 22.6V25.6"/><path d="M21 9.5H14a3.2 3.2 0 0 0 0 6.4h4.2a3.2 3.2 0 0 1 0 6.4H10.8"/></g></svg><svg class="ic" style="left:1660px;top:52px" width="32" height="32" viewBox="0 0 32 32"><circle cx="16" cy="16" r="15.9" fill="#2775ca"/><g fill="none" stroke="#e6f5ff" stroke-width="2.2" stroke-linecap="round"><path d="M12.6 5.6A11 11 0 0 0 12.6 26.4"/><path d="M19.4 5.6A11 11 0 0 1 19.4 26.4"/><path d="M19.6 12.9C19.2 11.4 17.8 10.8 16 10.8C14 10.8 12.6 11.8 12.6 13.3C12.6 16.8 19.6 15 19.6 18.6C19.6 20.2 18.1 21.2 16 21.2C14 21.2 12.6 20.4 12.3 18.9" stroke-width="2.3"/><path d="M16 8.6V10.6M16 21.4V23.4" stroke-width="2.3"/></g></svg><span class="t" style="left:1701.80px;top:55px;font-size:29px;color:#0a0a0a;letter-spacing:0.789px;">$0.00</span><span class="t muted" style="left:1876.40px;top:50px;font-size:32px;color:#a0a5ad;">-</span><div class="tag yes" style="width:116px"><span class="t" style="left:13.12px;top:8px;font-size:24.5px;color:#44b473;letter-spacing:0.371px;-webkit-text-stroke:0.45px #44b473;">Yes 46¢</span></div>
<div class="tag no" style="width:107px"><span class="t" style="left:11.62px;top:8px;font-size:24.5px;color:#bf1f25;letter-spacing:0.795px;-webkit-text-stroke:0.45px #bf1f25;">No 54¢</span></div><span class="t muted" style="left:2238.20px;top:50px;font-size:32px;color:#a0a5ad;">-</span><svg class="ic" style="left:2400px;top:48px" width="32" height="40" viewBox="0 0 32 40" fill="none" stroke="#6e737c" stroke-width="2.4" stroke-linecap="round" stroke-linejoin="round"><path d="M6.6 32.3V10.3a4 4 0 0 1 4-4H21.4a4 4 0 0 1 4 4V32.3L15.9 26Z"/></svg><svg class="ic" style="left:2460px;top:56px" width="32" height="24" viewBox="0 0 32 24" fill="none" stroke="#6e737c" stroke-width="2.4" stroke-linecap="round" stroke-linejoin="round"><path d="M6.8 8L15.9 16.8L25 7.9"/></svg></div>
<div class="row" style="top:1094px"><svg class="thumb" width="88" height="88" viewBox="0 0 88 88"><path fill="#fb0b0b" fill-rule="evenodd" d="M11 0H34L43.9 14L54.3 0H77.2A8 8 0 0 1 85.2 8V46L51.5 88H36.4L3.1 46.8V8A8 8 0 0 1 11 0ZM16.6 14.9H26.3L36.9 31.3H50.9L61.6 14.9H70.9V36.2H59.6L63.5 50.7L43.9 72.9L25.1 50.7L28.7 36.2H16.6Z"/></svg><span class="t title" style="left:145.80px;top:35px;font-size:26px;color:#0c0c0d;letter-spacing:0.787px;-webkit-text-stroke:0.6px #0c0c0d;">Will Mouz make it to the Blast Open Rotterdam Gr...</span><span class="t" style="left:144.85px;top:80px;font-size:24px;color:#7b8391;letter-spacing:-0.090px;-webkit-text-stroke:0.3px #7b8391;">Rules</span><span class="t" style="left:808.70px;top:55px;font-size:29px;color:#0a0a0a;letter-spacing:0.828px;">±4¢</span><span class="t" style="left:1042.30px;top:55px;font-size:29px;color:#0a0a0a;letter-spacing:1.372px;">50</span><svg class="ic" style="left:1238px;top:52px" width="32" height="32" viewBox="0 0 32 32"><circle cx="16" cy="16" r="15.9" fill="#2775ca"/><g fill="none" stroke="#e6f5ff" stroke-width="2.2" stroke-linecap="round"><path d="M12.6 5.6A11 11 0 0 0 12.6 26.4"/><path d="M19.4 5.6A11 11 0 0 1 19.4 26.4"/><path d="M19.6 12.9C19.2 11.4 17.8 10.8 16 10.8C14 10.8 12.6 11.8 12.6 13.3C12.6 16.8 19.6 15 19.6 18.6C19.6 20.2 18.1 21.2 16 21.2C14 21.2 12.6 20.4 12.3 18.9" stroke-width="2.3"/><path d="M16 8.6V10.6M16 21.4V23.4" stroke-width="2.3"/></g></svg><span class="t" style="left:1278.80px;top:55px;font-size:29px;color:#0a0a0a;">5</span><div class="bars"><i></i><i></i><i></i><i></i><i></i></div><svg class="ic" style="left:1542px;top:36px" width="32" height="32" viewBox="0 0 32 32"><circle cx="16" cy="16" r="16" fill="#fff"/><circle cx="16" cy="16" r="14.1" fill="#17b34c"/><g fill="none" stroke="#fff" stroke-width="2" stroke-linecap="round" stroke-linejoin="round"><path d="M16 6.4V9.4M16 22.6V25.6"/><path d="M21 9.5H14a3.2 3.2 0 0 0 0 6.4h4.2a3.2 3.2 0 0 1 0 6.4H10.8"/></g></svg><svg class="ic" style="left:1660px;top:52px" width="32" height="32" viewBox="0 0 32 32"><circle cx="16" cy="16" r="15.9" fill="#2775ca"/><g fill="none" stroke="#e6f5ff" stroke-width="2.2" stroke-linecap="round"><path d="M12.6 5.6A11 11 0 0 0 12.6 26.4"/><path d="M19.4 5.6A11 11 0 0 1 19.4 26.4"/><path d="M19.6 12.9C19.2 11.4 17.8 10.8 16 10.8C14 10.8 12.6 11.8 12.6 13.3C12.6 16.8 19.6 15 19.6 18.6C19.6 20.2 18.1 21.2 16 21.2C14 21.2 12.6 20.4 12.3 18.9" stroke-width="2.3"/><path d="M16 8.6V10.6M16 21.4V23.4" stroke-width="2.3"/></g></svg><span class="t" style="left:1701.80px;top:55px;font-size:29px;color:#0a0a0a;letter-spacing:0.789px;">$0.00</span><span class="t muted" style="left:1876.40px;top:50px;font-size:32px;color:#a0a5ad;">-</span><div class="tag yes" style="width:138px"><span class="t" style="left:13.12px;top:8px;font-size:24.5px;color:#44b473;letter-spacing:0.474px;-webkit-text-stroke:0.45px #44b473;">Yes 40.5¢</span></div>
<div class="tag no" style="width:125px"><span class="t" style="left:11.62px;top:8px;font-size:24.5px;color:#bf1f25;letter-spacing:0.220px;-webkit-text-stroke:0.45px #bf1f25;">No 59.5¢</span></div><span class="t muted" style="left:2238.20px;top:50px;font-size:32px;color:#a0a5ad;">-</span><svg class="ic" style="left:2400px;top:48px" width="32" height="40" viewBox="0 0 32 40" fill="none" stroke="#6e737c" stroke-width="2.4" stroke-linecap="round" stroke-linejoin="round"><path d="M6.6 32.3V10.3a4 4 0 0 1 4-4H21.4a4 4 0 0 1 4 4V32.3L15.9 26Z"/></svg><svg class="ic" style="left:2460px;top:56px" width="32" height="24" viewBox="0 0 32 24" fill="none" stroke="#6e737c" stroke-width="2.4" stroke-linecap="round" stroke-linejoin="round"><path d="M6.8 8L15.9 16.8L25 7.9"/></svg></div>
<div class="row alt" style="top:1230px"></div></div>
</div>
</body></html>
